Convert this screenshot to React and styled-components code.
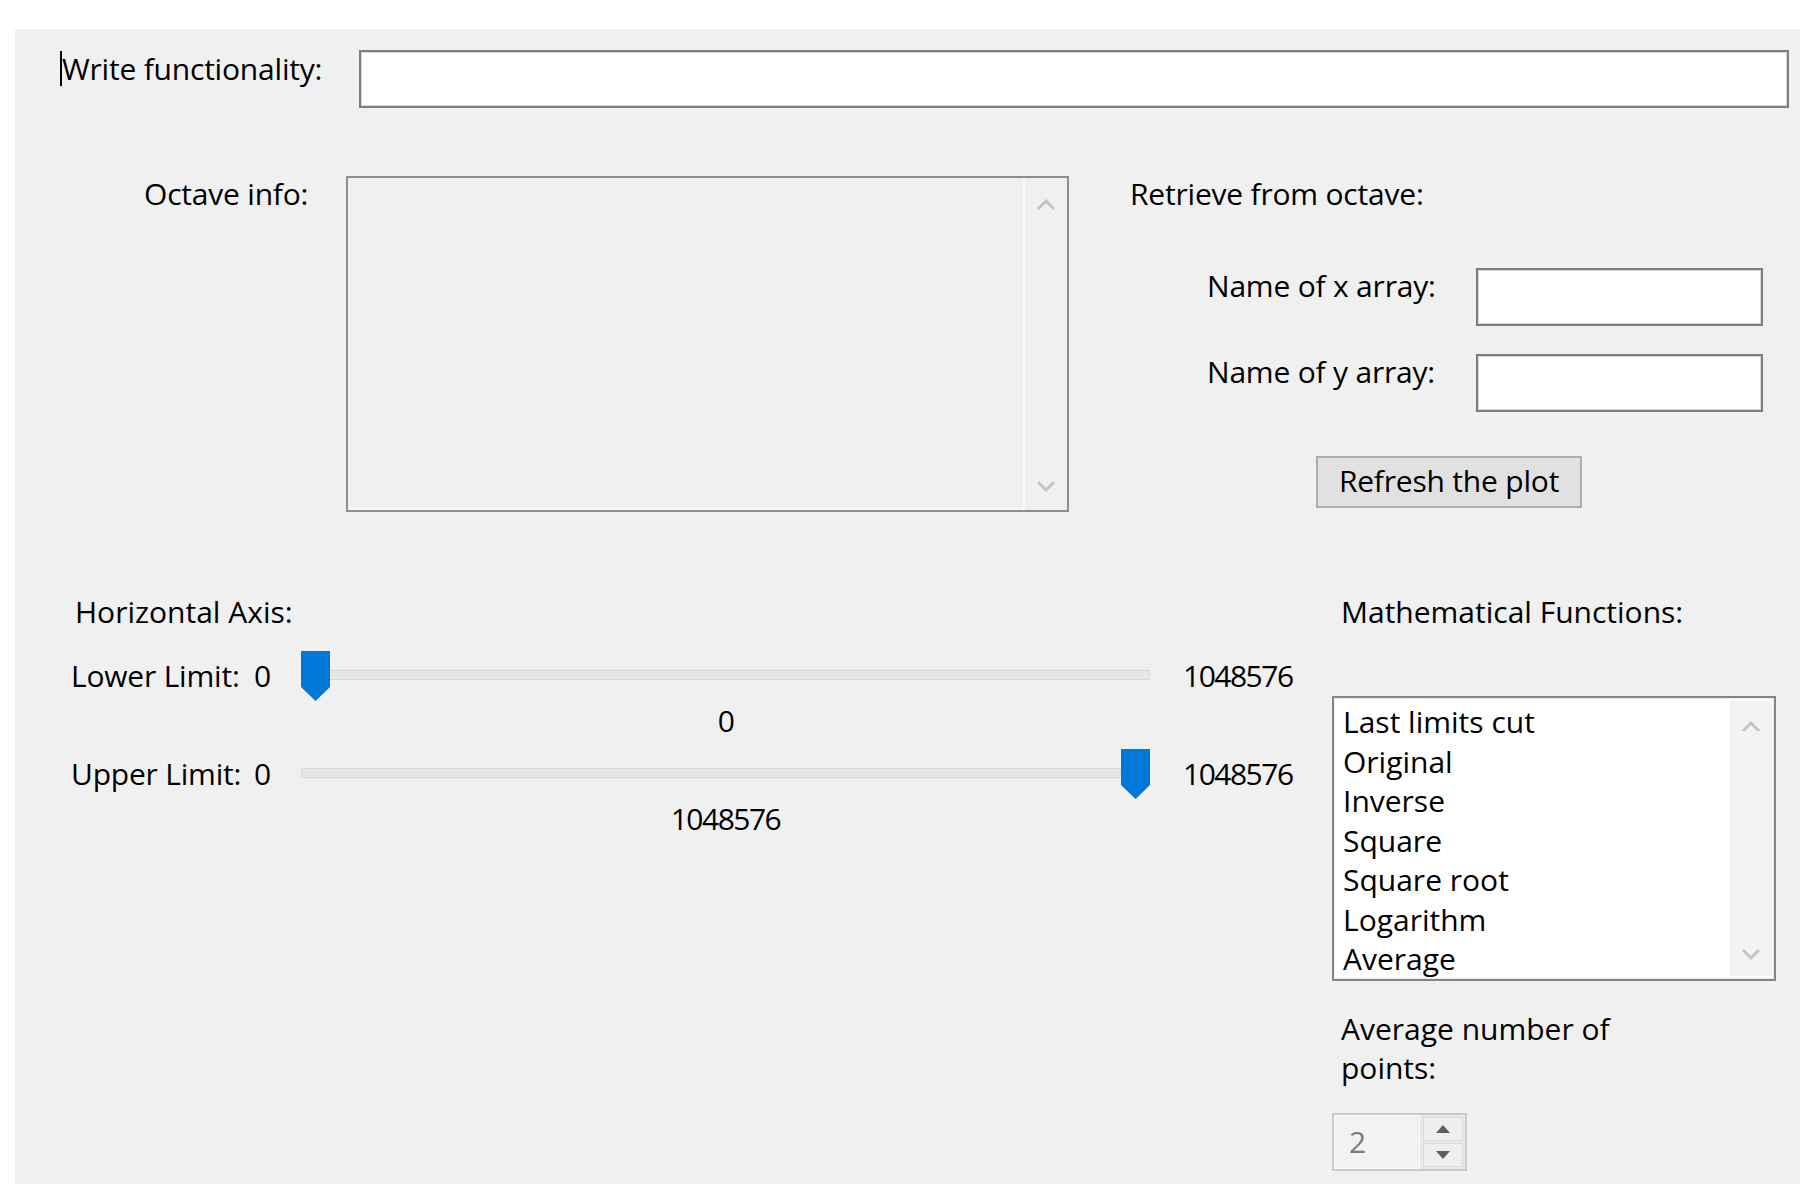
import React from "react";
import styled, { createGlobalStyle } from "styled-components";

const Global = createGlobalStyle`
  html, body { margin: 0; padding: 0; background: #ffffff; }
  body { font-family: "Open Sans", "Noto Sans", "Liberation Sans", sans-serif; color: #000; }
  * { box-sizing: border-box; }
`;

const Panel = styled.div`
  margin: 29px 0 0 15px;
  width: 1785px;
  height: 1155px;
  background: #f0f0f0;
  padding-top: 20px;
  display: flex;
  flex-direction: column;
  font-size: 30px;
`;

const Label = styled.div`
  font-size: 30px;
  line-height: ${(p) => p.$lh || 40}px;
  white-space: nowrap;
  color: #000;
  letter-spacing: ${(p) => (p.$num ? "-1.5px" : p.$tight ? "-0.2px" : "0")};
  text-align: ${(p) => p.$align || "left"};
  margin-top: ${(p) => p.$mt || 0}px;
  margin-left: ${(p) => p.$ml || 0}px;
  width: ${(p) => (p.$w ? `${p.$w}px` : "auto")};
  flex: none;
`;

const TopRow = styled.div`
  display: flex;
  align-items: flex-start;
  padding-left: 45px;
`;

const Caret = styled.span`
  display: inline-block;
  width: 2px;
  height: 35px;
  background: #000;
  vertical-align: -6px;
`;

const TextInput = styled.div`
  width: ${(p) => p.$w}px;
  height: 58px;
  margin-top: ${(p) => p.$mt || 0}px;
  background: #ffffff;
  border: 2px solid #7d7d7d;
  box-shadow: inset 0 0 0 1px #d9d9d9;
  flex: none;
`;

const OctaveRow = styled.div`
  display: flex;
  align-items: flex-start;
  margin-top: 66px;
  padding-left: 129px;
`;

const InfoBox = styled.div`
  width: 723px;
  height: 336px;
  margin-top: 2px;
  border: 2px solid #8e8e8e;
  box-shadow: inset -1px -2px 0 #fafafa;
  background: #f0f0f0;
  display: flex;
  justify-content: flex-end;
  flex: none;
`;

const ScrollStrip = styled.div`
  width: ${(p) => p.$w}px;
  margin: ${(p) => p.$m};
  border-left: ${(p) => (p.$divider ? "2px solid #fbfbfb" : "none")};
  background: ${(p) => p.$bg || "#f0f0f0"};
  display: flex;
  flex-direction: column;
  justify-content: space-between;
  align-items: center;
  padding: ${(p) => p.$pad};
`;

const RetrieveGroup = styled.div`
  display: flex;
  flex-direction: column;
  margin-left: 61px;
`;

const FieldRow = styled.div`
  display: flex;
  align-items: flex-start;
  padding-left: 77px;
  margin-top: ${(p) => p.$mt}px;
`;

const PushButton = styled.div`
  margin-top: 44px;
  margin-left: 186px;
  width: 266px;
  height: 52px;
  background: #e1e1e1;
  border: 2px solid #adadad;
  display: flex;
  align-items: center;
  justify-content: center;
  font-size: 30px;
  line-height: 40px;
  letter-spacing: -0.2px;
  padding-bottom: 2px;
`;

const Bottom = styled.div`
  display: grid;
  grid-template-columns: 1317px 1fr;
  margin-top: 80px;
`;

const AxisColumn = styled.div`
  padding-left: 56px;
  display: flex;
  flex-direction: column;
`;

const SliderRow = styled.div`
  display: grid;
  grid-template-columns: 183px 47px 849px auto;
  align-items: center;
  height: 50px;
  margin-top: ${(p) => p.$mt || 0}px;
`;

const ValueRow = styled.div`
  display: grid;
  grid-template-columns: 230px 849px;
  height: ${(p) => p.$h}px;
`;

const MaxValue = styled(Label)`
  padding-left: 33px;
`;

const CenterValue = styled(Label)`
  grid-column: 2;
  text-align: center;
`;

const Slider = styled.div`
  position: relative;
  height: 50px;
  width: 849px;
`;

const Track = styled.div`
  margin-top: 19px;
  height: 10px;
  background: #e7e7e7;
  border: 1px solid #d7d7d7;
`;

const Thumb = styled.svg`
  position: absolute;
  top: 0;
  left: ${(p) => (p.$end ? "820px" : "0px")};
  width: 29px;
  height: 50px;
`;

const MathColumn = styled.div`
  display: flex;
  flex-direction: column;
`;

const ListBox = styled.div`
  margin-top: 64px;
  width: 444px;
  height: 285px;
  background: #ffffff;
  border: 2px solid #858585;
  box-shadow: inset 0 0 0 1px #ececec;
  display: flex;
`;

const Items = styled.div`
  flex: 1;
  padding: 4px 9px;
`;

const Item = styled.div`
  font-size: 30px;
  line-height: 39.5px;
  white-space: nowrap;
`;

const SpinBox = styled.div`
  margin-top: 26px;
  width: 135px;
  height: 58px;
  border: 2px solid #c9c9c9;
  display: flex;
  background: #f0f0f0;
`;

const SpinText = styled.div`
  flex: 1;
  border: 1px solid #fbfbfb;
  background: #f2f2f2;
  color: #7a7a7a;
  font-size: 30px;
  line-height: 52px;
  padding-left: 14px;
`;

const SpinButtons = styled.div`
  width: 45px;
  display: flex;
  flex-direction: column;
  gap: 2px;
  padding: 2px 2px 2px 3px;
  background: #e8e8e8;
`;

const SpinButton = styled.div`
  flex: 1;
  background: #efefef;
  border: 1px solid #dcdcdc;
  display: flex;
  align-items: center;
  justify-content: center;
`;

const Chevron = ({ up }) => (
  <svg width="20" height="12" viewBox="0 0 20 12">
    <polyline
      points={up ? "2,10 10,2 18,10" : "2,2 10,10 18,2"}
      fill="none"
      stroke="#c4c4c4"
      strokeWidth="3"
    />
  </svg>
);

const Triangle = ({ up }) => (
  <svg width="14" height="8" viewBox="0 0 14 8">
    <polygon points={up ? "0,8 7,0 14,8" : "0,0 14,0 7,8"} fill="#5f5f5f" />
  </svg>
);

const ThumbShape = ({ end }) => (
  <Thumb $end={end} viewBox="0 0 29 50">
    <polygon points="0,0 29,0 29,36 14.5,50 0,36" fill="#0078d7" />
  </Thumb>
);

const LimitSlider = ({ label, end, mt }) => (
  <SliderRow $mt={mt}>
    <Label $tight>{label}</Label>
    <Label $num>0</Label>
    <Slider>
      <Track />
      <ThumbShape end={end} />
    </Slider>
    <MaxValue $num>1048576</MaxValue>
  </SliderRow>
);

const functions = [
  "Last limits cut",
  "Original",
  "Inverse",
  "Square",
  "Square root",
  "Logarithm",
  "Average",
];

export default function App() {
  return (
    <>
      <Global />
      <Panel>
        <TopRow>
          <Label $w={299} $tight>
            <Caret />
            Write functionality:
          </Label>
          <TextInput $w={1430} $mt={1} />
        </TopRow>

        <OctaveRow>
          <Label $w={202} $tight>Octave info:</Label>
          <InfoBox>
            <ScrollStrip $w={44} $m="0" $divider $pad="21px 0 18px">
              <Chevron up />
              <Chevron />
            </ScrollStrip>
          </InfoBox>

          <RetrieveGroup>
            <Label $tight>Retrieve from octave:</Label>
            <FieldRow $mt={54}>
              <Label $w={269} $mt={-2} $tight>Name of x array:</Label>
              <TextInput $w={287} />
            </FieldRow>
            <FieldRow $mt={28}>
              <Label $w={269} $mt={-2} $tight>Name of y array:</Label>
              <TextInput $w={287} />
            </FieldRow>
            <PushButton>Refresh the plot</PushButton>
          </RetrieveGroup>
        </OctaveRow>

        <Bottom>
          <AxisColumn>
            <Label $ml={4}>Horizontal Axis:</Label>
            <LimitSlider label="Lower Limit:" mt={19} />
            <ValueRow $h={48}>
              <CenterValue $num>0</CenterValue>
            </ValueRow>
            <LimitSlider label="Upper Limit:" end />
            <ValueRow $h={40}>
              <CenterValue $num>1048576</CenterValue>
            </ValueRow>
          </AxisColumn>

          <MathColumn>
            <Label $ml={9}>Mathematical Functions:</Label>
            <ListBox>
              <Items>
                {functions.map((f) => (
                  <Item key={f}>{f}</Item>
                ))}
              </Items>
              <ScrollStrip $w={42} $m="3px 2px 3px 0" $bg="#f3f3f3" $pad="20px 0 16px">
                <Chevron up />
                <Chevron />
              </ScrollStrip>
            </ListBox>
            <Label $ml={9} $mt={28} $lh={39}>
              Average number of
              <br />
              points:
            </Label>
            <SpinBox>
              <SpinText>2</SpinText>
              <SpinButtons>
                <SpinButton>
                  <Triangle up />
                </SpinButton>
                <SpinButton>
                  <Triangle />
                </SpinButton>
              </SpinButtons>
            </SpinBox>
          </MathColumn>
        </Bottom>
      </Panel>
    </>
  );
}
